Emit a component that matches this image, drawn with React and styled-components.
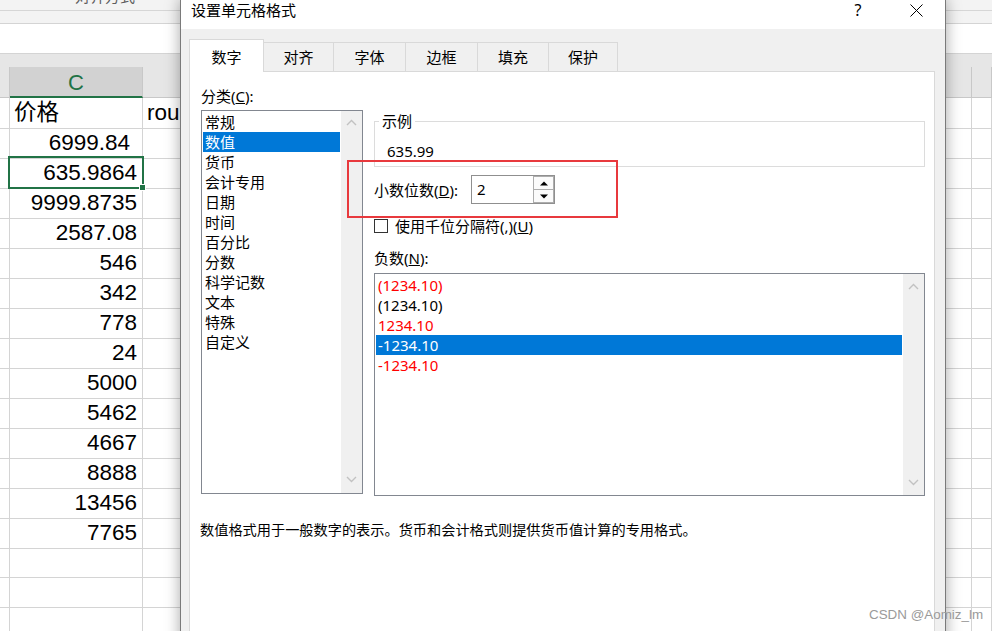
import React from 'react';
import styled, { createGlobalStyle } from 'styled-components';

const GlobalStyle = createGlobalStyle`
  html, body { margin: 0; padding: 0; background: #fff; }
  body { font-family: "Noto Sans", "Noto Sans CJK SC", sans-serif; }
  * { box-sizing: border-box; }
`;

const Screen = styled.div`
  position: relative;
  width: 992px;
  height: 631px;
  overflow: hidden;
  background: #fff;
`;

/* ---------- spreadsheet behind ---------- */
const Sheet = styled.div`
  font-family: "Liberation Sans", "Noto Sans CJK SC", sans-serif;
`;

const RibbonEdge = styled.div`
  height: 11px;
  background: #f3f3f3;
  border-bottom: 1px solid #d6d6d6;
  overflow: hidden;
  display: flex;
  align-items: flex-end;
  padding-left: 75px;
`;

const RibbonLabel = styled.span`
  font-family: "Noto Sans CJK SC", sans-serif;
  font-size: 15px;
  line-height: 20px;
  color: #5e5e5e;
  margin-bottom: 4px;
  white-space: nowrap;
`;

const RibbonFoot = styled.div`
  height: 13px;
  background: #f3f3f3;
  border-bottom: 1px solid #d4d4d4;
`;

const FormulaArea = styled.div`
  height: 30px;
  background: #fff;
  border-bottom: 1px solid #d4d4d4;
`;

const HeaderGap = styled.div`
  height: 13px;
  background: #e6e6e6;
`;

const COLS = '10px 133px 829px 1fr';

const HeaderRow = styled.div`
  display: grid;
  grid-template-columns: ${COLS};
  height: 31px;
  background: #e6e6e6;
`;

const HeaderCell = styled.div`
  border-right: 1px solid #c8c8c8;
  border-bottom: ${(p) => (p.$active ? '2px solid #217346' : '1px solid #c8c8c8')};
  background: ${(p) => (p.$active ? '#d2d2d2' : '#e6e6e6')};
  color: #217346;
  font-size: 22px;
  display: flex;
  align-items: center;
  justify-content: center;
  padding-top: 2px;
`;

const Row = styled.div`
  display: grid;
  grid-template-columns: ${COLS};
  height: 30px;
`;

const Cell = styled.div`
  position: relative;
  border-right: 1px solid #d4d4d4;
  border-bottom: 1px solid #d4d4d4;
  font-size: 22.5px;
  line-height: 30px;
  color: #000;
  white-space: nowrap;
  overflow: visible;
  text-align: ${(p) => (p.$left ? 'left' : 'right')};
  padding: ${(p) => (p.$left ? '0 0 0 4px' : `0 ${p.$indent || 5}px 0 0`)};
  z-index: ${(p) => (p.$selected ? 2 : 0)};
  ${(p) =>
    p.$selected &&
    `
    &::after {
      content: '';
      position: absolute;
      left: -2px; right: -2px; top: -2px; bottom: -1px;
      border: 2px solid #217346;
    }
    &::before {
      content: '';
      position: absolute;
      right: -4px; bottom: -3px;
      width: 5px; height: 5px;
      background: #217346;
      border: 1px solid #fff;
      z-index: 1;
    }
  `}
`;

/* ---------- dialog ---------- */
const Dialog = styled.div`
  position: absolute;
  left: 180px;
  top: -1px;
  width: 766px;
  height: 720px;
  border: 1px solid #7a7a7a;
  background: #f0f0f0;
  box-shadow: 0 0 14px rgba(0, 0, 0, 0.35);
  display: flex;
  flex-direction: column;
  font-family: "Noto Sans", "Noto Sans CJK SC", sans-serif;
  font-size: 15px;
  color: #000;
`;

const TitleBar = styled.div`
  height: 29px;
  background: #fff;
  display: flex;
  align-items: flex-start;
`;

const Title = styled.div`
  padding-left: 10px;
  line-height: 19px;
  font-family: "Noto Sans CJK SC", sans-serif;
  flex: 1;
`;

const TitleButton = styled.div`
  width: 58px;
  height: 20px;
  display: flex;
  align-items: center;
  justify-content: center;
  font-size: 16px;
  line-height: 20px;
`;

const Body = styled.div`
  flex: 1;
  display: flex;
  flex-direction: column;
  padding: 10px 10px 0 8px;
`;

const TabStrip = styled.div`
  display: flex;
  align-items: flex-end;
  height: 32px;
`;

const Tab = styled.div`
  position: relative;
  z-index: ${(p) => (p.$active ? 1 : 0)};
  width: ${(p) => p.$w}px;
  height: ${(p) => (p.$active ? 33 : 29)}px;
  margin-bottom: ${(p) => (p.$active ? -1 : 0)}px;
  margin-left: ${(p) => (p.$first ? 0 : -1)}px;
  background: ${(p) => (p.$active ? '#fff' : '#f0f0f0')};
  border: 1px solid #d9d9d9;
  border-bottom: none;
  display: flex;
  align-items: center;
  justify-content: center;
  padding-bottom: ${(p) => (p.$active ? 0 : 1)}px;
  font-family: "Noto Sans CJK SC", sans-serif;
`;

const Panel = styled.div`
  flex: 1;
  background: #fff;
  border: 1px solid #d9d9d9;
  padding: 14px 11px 0 11px;
`;

const Columns = styled.div`
  display: grid;
  grid-template-columns: 162px 551px;
  column-gap: 11px;
  align-items: start;
`;

const Column = styled.div`
  display: flex;
  flex-direction: column;
`;

const Label = styled.div`
  line-height: 20px;
  white-space: nowrap;
  margin-top: ${(p) => p.$mt || 0}px;
  width: ${(p) => (p.$w ? `${p.$w}px` : 'auto')};
`;

const ListBox = styled.div`
  height: ${(p) => p.$h}px;
  margin-top: ${(p) => p.$mt || 0}px;
  border: 1px solid #828790;
  background: #fff;
  display: flex;
`;

const Items = styled.div`
  flex: 1;
  padding: 1px;
`;

const Item = styled.div`
  height: 20px;
  line-height: 20px;
  padding-left: 2px;
  white-space: nowrap;
  color: ${(p) => (p.$selected ? '#fff' : p.$red ? '#ff0000' : '#000')};
  background: ${(p) => (p.$selected ? '#0078d7' : 'transparent')};
`;

const ScrollBar = styled.div`
  width: 21px;
  background: #f0f0f0;
  display: flex;
  flex-direction: column;
  justify-content: space-between;
  align-items: center;
  padding: ${(p) => p.$pad};
`;

const Fieldset = styled.fieldset`
  margin: 25px 0 0 0;
  border: 1px solid #dcdcdc;
  padding: 10px 12px 5px 12px;
  min-width: 0;
`;

const Legend = styled.legend`
  padding: 0 3px;
  margin-left: -8px;
  line-height: 20px;
  font-family: "Noto Sans CJK SC", sans-serif;
`;

const Sample = styled.div`
  line-height: 20px;
`;

const FieldRow = styled.div`
  display: flex;
  align-items: center;
  margin-top: ${(p) => p.$mt}px;
  gap: ${(p) => p.$gap || 0}px;
`;

const Spin = styled.div`
  display: flex;
  width: 84px;
  height: 29px;
  border: 1px solid #8f8f8f;
  background: #fff;
`;

const SpinValue = styled.div`
  flex: 1;
  padding-left: 5px;
  line-height: 27px;
  font-size: 15px;
`;

const SpinButtons = styled.div`
  width: 21px;
  display: flex;
  flex-direction: column;
`;

const SpinButton = styled.div`
  flex: 1;
  border: 1px solid #adadad;
  margin-top: ${(p) => (p.$down ? -1 : 0)}px;
  background: #fbfbfb;
  display: flex;
  align-items: center;
  justify-content: center;
`;

const CheckBox = styled.div`
  width: 14px;
  height: 14px;
  border: 1px solid #333;
  background: #fff;
`;

const Description = styled.div`
  margin: 23px 0 0 -1px;
  font-size: 14.2px;
  line-height: 20px;
  font-family: "Noto Sans CJK SC", sans-serif;
`;

/* ---------- overlays ---------- */
const Annotation = styled.div`
  position: absolute;
  left: 347px;
  top: 160px;
  width: 271px;
  height: 58px;
  border: 2px solid #e8393d;
  pointer-events: none;
`;

const Watermark = styled.div`
  position: absolute;
  left: 869px;
  top: 606px;
  font-family: "Liberation Sans", sans-serif;
  font-size: 13.4px;
  line-height: 18px;
  color: #9a9a9a;
  white-space: nowrap;
`;

const Chevron = ({ up }) => (
  <svg width="11" height="7" viewBox="0 0 11 7">
    <polyline
      points={up ? '1,6 5.5,1.5 10,6' : '1,1 5.5,5.5 10,1'}
      fill="none"
      stroke="#c2c2c2"
      strokeWidth="1.4"
    />
  </svg>
);

const Triangle = ({ up }) => (
  <svg width="8" height="5" viewBox="0 0 8 5">
    <polygon points={up ? '0,4.5 4,0.5 8,4.5' : '0,0.5 4,4.5 8,0.5'} fill="#000" />
  </svg>
);

const CloseIcon = () => (
  <svg width="13" height="13" viewBox="0 0 13 13">
    <path d="M0.5 0.5 L12.5 12.5 M12.5 0.5 L0.5 12.5" stroke="#000" strokeWidth="1" fill="none" />
  </svg>
);

const values = [
  { v: '6999.84', indent: 12 },
  { v: '635.9864' },
  { v: '9999.8735' },
  { v: '2587.08' },
  { v: '546' },
  { v: '342' },
  { v: '778' },
  { v: '24' },
  { v: '5000' },
  { v: '5462' },
  { v: '4667' },
  { v: '8888' },
  { v: '13456' },
  { v: '7765' },
  { v: '' },
  { v: '' },
  { v: '' },
  { v: '' },
];

const categories = ['常规', '数值', '货币', '会计专用', '日期', '时间', '百分比', '分数', '科学记数', '文本', '特殊', '自定义'];

const negatives = [
  { t: '(1234.10)', red: true },
  { t: '(1234.10)' },
  { t: '1234.10', red: true },
  { t: '-1234.10', selected: true },
  { t: '-1234.10', red: true },
];

const tabs = [
  { t: '数字', w: 75 },
  { t: '对齐', w: 71 },
  { t: '字体', w: 73 },
  { t: '边框', w: 73 },
  { t: '填充', w: 72 },
  { t: '保护', w: 70 },
];

export default function App() {
  return (
    <Screen>
      <GlobalStyle />
      <Sheet>
        <RibbonEdge>
          <RibbonLabel>对齐方式</RibbonLabel>
        </RibbonEdge>
        <RibbonFoot />
        <FormulaArea />
        <HeaderGap />
        <HeaderRow>
          <HeaderCell />
          <HeaderCell $active>C</HeaderCell>
          <HeaderCell />
          <HeaderCell />
        </HeaderRow>
        <Row>
          <Cell />
          <Cell $left>价格</Cell>
          <Cell $left>rou</Cell>
          <Cell />
        </Row>
        {values.map((r, i) => (
          <Row key={i}>
            <Cell />
            <Cell $selected={i === 1} $indent={r.indent}>
              {r.v}
            </Cell>
            <Cell />
            <Cell />
          </Row>
        ))}
      </Sheet>

      <Dialog>
        <TitleBar>
          <Title>设置单元格格式</Title>
          <TitleButton>?</TitleButton>
          <TitleButton>
            <CloseIcon />
          </TitleButton>
        </TitleBar>
        <Body>
          <TabStrip>
            {tabs.map((t, i) => (
              <Tab key={t.t} $w={t.w} $active={i === 0} $first={i === 0}>
                {t.t}
              </Tab>
            ))}
          </TabStrip>
          <Panel>
            <Columns>
              <Column>
                <Label>
                  分类(<u>C</u>):
                </Label>
                <ListBox $h={384} $mt={4}>
                  <Items>
                    {categories.map((c, i) => (
                      <Item key={c} $selected={i === 1}>
                        {c}
                      </Item>
                    ))}
                  </Items>
                  <ScrollBar $pad="8px 0 10px">
                    <Chevron up />
                    <Chevron />
                  </ScrollBar>
                </ListBox>
              </Column>
              <Column>
                <Fieldset>
                  <Legend>示例</Legend>
                  <Sample>635.99</Sample>
                </Fieldset>
                <FieldRow $mt={8}>
                  <Label $w={97}>
                    小数位数(<u>D</u>):
                  </Label>
                  <Spin>
                    <SpinValue>2</SpinValue>
                    <SpinButtons>
                      <SpinButton>
                        <Triangle up />
                      </SpinButton>
                      <SpinButton $down>
                        <Triangle />
                      </SpinButton>
                    </SpinButtons>
                  </Spin>
                </FieldRow>
                <FieldRow $mt={12} $gap={7}>
                  <CheckBox />
                  <Label>
                    使用千位分隔符(,)(<u>U</u>)
                  </Label>
                </FieldRow>
                <Label $mt={12}>
                  负数(<u>N</u>):
                </Label>
                <ListBox $h={223} $mt={5}>
                  <Items>
                    {negatives.map((n, i) => (
                      <Item key={i} $red={n.red} $selected={n.selected}>
                        {n.t}
                      </Item>
                    ))}
                  </Items>
                  <ScrollBar $pad="9px 0 9px">
                    <Chevron up />
                    <Chevron />
                  </ScrollBar>
                </ListBox>
              </Column>
            </Columns>
            <Description>数值格式用于一般数字的表示。货币和会计格式则提供货币值计算的专用格式。</Description>
          </Panel>
        </Body>
      </Dialog>

      <Annotation />
      <Watermark>CSDN @Aomiz_lm</Watermark>
    </Screen>
  );
}
